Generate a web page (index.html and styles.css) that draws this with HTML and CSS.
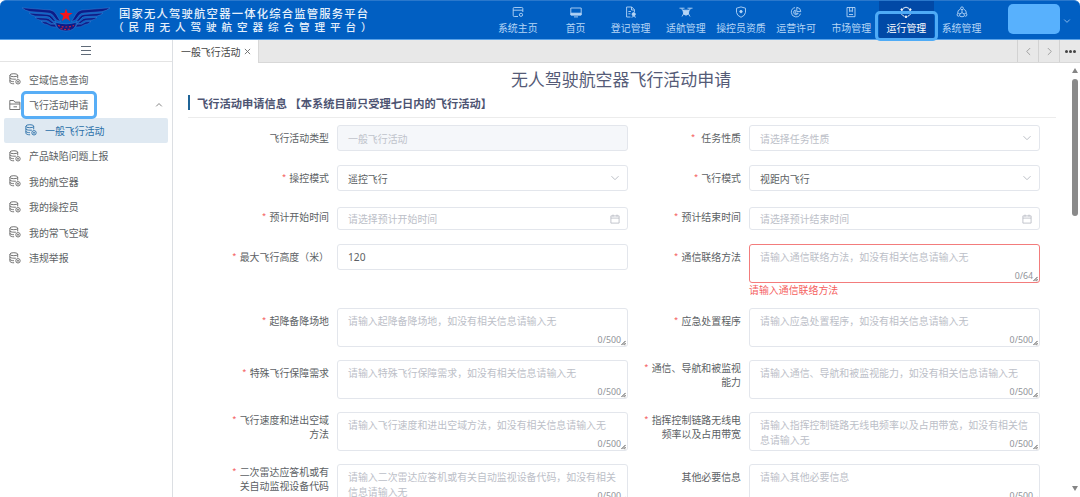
FILE: index.html
```
<!DOCTYPE html>
<html lang="zh-CN">
<head>
    <meta charset="UTF-8">
    <meta name="viewport" content="width=device-width, initial-scale=1.0">
    <title>国家无人驾驶航空器一体化综合监管服务平台</title>
    <link rel="stylesheet" href="styles.css">
</head>
<body>
    <!-- shared icons -->
    <svg class="defs" width="0" height="0">
        <symbol id="db" viewBox="0 0 12 12">
            <g fill="none" stroke="currentColor" stroke-width="0.9">
                <ellipse cx="4.800" cy="2.200" rx="3.900" ry="1.500"/>
                <path d="M.9 2.200v7c0 .9 1.800 1.600 4.200 1.600M8.700 2.200v3.200M.9 4.700c0 .9 1.800 1.500 4 1.500h2M.9 7.200c0 .9 1.800 1.500 4 1.500"/>
                <circle cx="9" cy="8.800" r="2.200"/>
                <path d="M8.200 8.800h1.600M9 8v1.600"/>
            </g>
        </symbol>
        <symbol id="down" viewBox="0 0 10 10">
            <path d="M1.500 3.200L5 6.700l3.500-3.500" fill="none" stroke="currentColor" stroke-width="0.9"/>
        </symbol>
        <symbol id="date" viewBox="0 0 10 10">
            <path d="M.9 1.900h8.200v7.200H.9zM.9 4.100h8.200M3 .6v2M7 .6v2" fill="none" stroke="currentColor" stroke-width="0.8"/>
        </symbol>
        <symbol id="grip" viewBox="0 0 6 6">
            <path d="M.5 5.500l5-5M3 5.500l2.500-2.500M5 5.700l.7-.7" fill="none" stroke="#444" stroke-width="1.100"/>
        </symbol>
    </svg>

    <header class="header">
        <svg class="logo" viewBox="0 0 88 25">
            <g fill="#0b1c88" stroke="#4b8ad9" stroke-width="0.400">
                <path d="M0 .8L28 3q4 .4 6 4l4.500 7.500-4-1.500-4-5.200Q29 6.200 26 6L8 4.600Q3 3.600 0 .8z"/>
                <path d="M88 .8L60 3q-4 .4-6 4l-4.500 7.500 4-1.500 4-5.200Q59 6.200 62 6l18-1.400q5-1 8-3.800z"/>
                <path d="M7 6l19 1.400q2.500.3 4 2.200l4 5-3-.6-3-3.200q-1-1-3-1.200L13 9Q9 8.200 7 6z"/>
                <path d="M81 6L62 7.400q-2.500.3-4 2.200l-4 5 3-.6 3-3.200q1-1 3-1.200L75 9q4-.8 6-3z"/>
                <path d="M13 10.400l12 .8q2 .3 3 1.600l5 4-3.500-.4-3-2.200-2.500-.8-6-.4q-3.500-.6-5-2.600z"/>
                <path d="M75 10.400l-12 .8q-2 .3-3 1.600l-5 4 3.500-.4 3-2.200 2.500-.8 6-.4q3.500-.6 5-2.600z"/>
                <path d="M19 14.500l5 .3 4.500 2.400h4.500l1.500 3q-6 0-9-2.500-4-.4-6.500-3.200z"/>
                <path d="M69 14.500l-5 .3-4.500 2.400H55l-1.500 3q6 0 9-2.500 4-.4 6.500-3.200z"/>
                <path d="M33.500 15.500q10.500 3 21 0-.5 4-3 6.300-3 2.200-7.500 2.200t-7.500-2.200q-2.500-2.300-3-6.300z"/>
            </g>
            <path d="M36 18.500q8 3 16 0M38.500 21.500q5.500 2 11 0" fill="none" stroke="#c5203f" stroke-width="1.200" stroke-dasharray="2 1.700"/>
            <path d="M44 1.500l1.600 4.400h4.900l-3.900 3 1.500 5L44 11.200l-4.100 2.700 1.500-5-3.900-3h4.900z" fill="#f4151c"/>
        </svg>
        <div class="brand">
            <div class="brand-main">国家无人驾驶航空器一体化综合监管服务平台</div>
            <div class="brand-sub">（民用无人驾驶航空器综合管理平台）</div>
        </div>
        <nav class="nav">
            <a class="nav-item first">
                <svg viewBox="0 0 12 12"><path d="M6 10.500H2.200a1 1 0 0 1-1-1v-7a1 1 0 0 1 1-1h7.600a1 1 0 0 1 1 1V6M1.200 4.200h9.600"/><circle cx="9" cy="8.800" r="1.600"/></svg>
                <span>系统主页</span>
            </a>
            <a class="nav-item">
                <svg viewBox="0 0 12 12"><path d="M.8 2h10.400v7H.8zM4 10.900h4"/><path d="M1 7.200h10v1.700H1z" fill="currentColor"/></svg>
                <span>首页</span>
            </a>
            <a class="nav-item">
                <svg viewBox="0 0 12 12"><path d="M5.500 11H1.600V1h5.200l2.600 2.600V6M6.500 1v3h3M3.400 5.500h2.500M3.400 7.800h2"/><circle cx="8.700" cy="8.200" r="1.600" fill="currentColor"/><path d="M6.500 11.300q2.200-2 4.400 0"/></svg>
                <span>登记管理</span>
            </a>
            <a class="nav-item">
                <svg class="wide" viewBox="0 0 14 12"><path d="M.5 2.200h5M8.500 2.200h5M3 2.200v1.500l2.500 1.500M11 2.200v1.500L8.500 5.200M5 7l-2 3.500M9 7l2 3.500"/><path d="M4 4.200h6l-.7 4L7 9.200l-2.300-1z" fill="currentColor"/></svg>
                <span>适航管理</span>
            </a>
            <a class="nav-item">
                <svg viewBox="0 0 12 12"><path d="M6 .9l4.500 1.300v4.200Q10.200 9.600 6 11.300 1.800 9.600 1.500 6.400V2.200z"/><circle cx="6" cy="5.600" r="1.200" fill="currentColor"/></svg>
                <span>操控员资质</span>
            </a>
            <a class="nav-item">
                <svg viewBox="0 0 12 12"><path d="M5 1.600a4.700 4.700 0 1 0 5.500 6"/><path d="M6.800 1.300a4.500 4.500 0 0 1 4 4.300H6.800zM5.200 4a2.400 2.400 0 1 0 3 3.300H5.200z"/></svg>
                <span>运营许可</span>
            </a>
            <a class="nav-item">
                <svg viewBox="0 0 12 12"><path d="M2 1.500h8v9.200H2zM4.600 1.500v4.200L6 4.600l1.400 1.100V1.500M4 8.500h4"/></svg>
                <span>市场管理</span>
            </a>
            <a class="nav-item active">
                <svg viewBox="0 0 12 12"><path d="M3 2.400a4.700 4.700 0 0 1 6 0M10.700 5a4.700 4.700 0 0 1-3 5.300M4.300 10.300a4.700 4.700 0 0 1-3-5.300"/><g fill="currentColor"><circle cx="1.800" cy="3.600" r=".9"/><circle cx="10.200" cy="3.600" r=".9"/><circle cx="6" cy="10.800" r=".9"/></g></svg>
                <span>运行管理</span>
                <i class="mark"></i>
            </a>
            <a class="nav-item">
                <svg viewBox="0 0 12 12"><circle cx="6" cy="2.300" r="1.400"/><circle cx="2.500" cy="8.800" r="1.400"/><circle cx="9.500" cy="8.800" r="1.400"/><path d="M6 3.700v3M6 6.700L3.700 8M6 6.700L8.300 8M4.400 3a4.500 4.500 0 0 0-2.800 4.500M7.600 3a4.500 4.500 0 0 1 2.800 4.500M4 10.300q2 1 4 0"/></svg>
                <span>系统管理</span>
            </a>
        </nav>
        <div class="user"></div>
        <svg class="user-arrow" viewBox="0 0 10 10"><use href="#down"/></svg>
    </header>

    <div class="layout">
        <aside class="sidebar">
            <div class="toggle"><i></i><i></i><i></i></div>
            <ul class="menu">
                <li><svg><use href="#db"/></svg><span>空域信息查询</span></li>
                <li>
                    <svg viewBox="0 0 12 12"><path d="M.8 10.500v-9h3.800l1.300 1.700h5v7.300zM.8 5h10M4.500 7.800h3.500" fill="none" stroke="currentColor" stroke-width="0.9"/></svg>
                    <span class="boxed">飞行活动申请</span>
                    <svg class="up" viewBox="0 0 10 10"><path d="M1.500 6.700L5 3.200l3.500 3.500" fill="none" stroke="currentColor"/></svg>
                </li>
                <li class="current"><svg><use href="#db"/></svg><span>一般飞行活动</span></li>
                <li><svg><use href="#db"/></svg><span>产品缺陷问题上报</span></li>
                <li><svg><use href="#db"/></svg><span>我的航空器</span></li>
                <li><svg><use href="#db"/></svg><span>我的操控员</span></li>
                <li><svg><use href="#db"/></svg><span>我的常飞空域</span></li>
                <li><svg><use href="#db"/></svg><span>违规举报</span></li>
            </ul>
        </aside>

        <main class="main">
            <div class="tabs">
                <div class="tab"><span>一般飞行活动</span><svg viewBox="0 0 8 8"><path d="M1 1l6 6M7 1L1 7"/></svg></div>
                <div class="tab-tools">
                    <span><svg viewBox="0 0 10 10"><path d="M6.800 1.200L3 5l3.800 3.800"/></svg></span>
                    <span><svg viewBox="0 0 10 10"><path d="M3.200 1.200L7 5 3.200 8.800"/></svg></span>
                    <span class="more"><i></i><i></i><i></i></span>
                </div>
            </div>

            <div class="page">
                <div class="content">
                    <h1>无人驾驶航空器飞行活动申请</h1>
                    <h2>飞行活动申请信息 【本系统目前只受理七日内的飞行活动】</h2>

                    <div class="form">
                        <div class="label">飞行活动类型</div>
                        <div class="input disabled">一般飞行活动</div>
                        <div class="label required far">任务性质</div>
                        <div class="input empty">请选择任务性质<svg><use href="#down"/></svg></div>

                        <div class="label required">操控模式</div>
                        <div class="input">遥控飞行<svg><use href="#down"/></svg></div>
                        <div class="label required">飞行模式</div>
                        <div class="input">视距内飞行<svg><use href="#down"/></svg></div>

                        <div class="label required date">预计开始时间</div>
                        <div class="input date empty">请选择预计开始时间<svg><use href="#date"/></svg></div>
                        <div class="label required date">预计结束时间</div>
                        <div class="input date empty">请选择预计结束时间<svg><use href="#date"/></svg></div>

                        <div class="label required">最大飞行高度（米）</div>
                        <div class="input number">120</div>
                        <div class="label required">通信联络方法</div>
                        <div>
                            <div class="textarea error">请输入通信联络方法，如没有相关信息请输入无<span class="count">0/64<svg><use href="#grip"/></svg></span></div>
                            <div class="error-text">请输入通信联络方法</div>
                        </div>

                        <div class="label required">起降备降场地</div>
                        <div class="textarea">请输入起降备降场地，如没有相关信息请输入无<span class="count">0/500<svg><use href="#grip"/></svg></span></div>
                        <div class="label required">应急处置程序</div>
                        <div class="textarea">请输入应急处置程序，如没有相关信息请输入无<span class="count">0/500<svg><use href="#grip"/></svg></span></div>

                        <div class="label required">特殊飞行保障需求</div>
                        <div class="textarea">请输入特殊飞行保障需求，如没有相关信息请输入无<span class="count">0/500<svg><use href="#grip"/></svg></span></div>
                        <div class="label required">通信、导航和被监视<br>能力</div>
                        <div class="textarea">请输入通信、导航和被监视能力，如没有相关信息请输入无<span class="count">0/500<svg><use href="#grip"/></svg></span></div>

                        <div class="label required">飞行速度和进出空域<br>方法</div>
                        <div class="textarea">请输入飞行速度和进出空域方法，如没有相关信息请输入无<span class="count">0/500<svg><use href="#grip"/></svg></span></div>
                        <div class="label required">指挥控制链路无线电<br>频率以及占用带宽</div>
                        <div class="textarea">请输入指挥控制链路无线电频率以及占用带宽，如没有相关信息请输入无<span class="count">0/500<svg><use href="#grip"/></svg></span></div>

                        <div class="label required">二次雷达应答机或有<br>关自动监视设备代码</div>
                        <div class="textarea">请输入二次雷达应答机或有关自动监视设备代码，如没有相关信息请输入无<span class="count">0/500<svg><use href="#grip"/></svg></span></div>
                        <div class="label">其他必要信息</div>
                        <div class="textarea">请输入其他必要信息<span class="count">0/500<svg><use href="#grip"/></svg></span></div>
                    </div>
                </div>
                <div class="scrollbar">
                    <i class="arrow-up"></i>
                    <i class="thumb"></i>
                    <i class="arrow-down"></i>
                </div>
            </div>
        </main>
    </div>
</body>
</html>
```
FILE: styles.css
```
* {
    box-sizing: border-box;
}

body {
    margin: 0;
    width: 1080px;
    height: 497px;
    overflow: hidden;
    background: #fff;
    color: #5c5f64;
    font-family: "Noto Sans CJK SC", sans-serif;
    font-size: 9.930px;
    font-weight: 400;
}

.defs {
    position: absolute;
}

/* header */
.header {
    display: flex;
    height: 40px;
    background: #015fc2;
    border-top: 1px solid #2a78cc;
    border-bottom: 1px solid #5ba3e8;
    border-radius: 6px 6px 0 0;
    color: #fff;
}

.logo {
    width: 88px;
    height: 25px;
    margin: 6px 0 0 22px;
}

.brand {
    width: 377.500px;
    padding: 5px 0 0 9px;
    color: #e6f0fb;
    font-weight: 500;
    white-space: nowrap;
}

.brand-main {
    font-size: 11.3px;
    line-height: 14px;
    letter-spacing: 1.22px;
}

.brand-sub {
    margin-left: -6px;
    font-size: 10.600px;
    line-height: 13px;
    letter-spacing: 4.900px;
}

.nav {
    display: flex;
}

.nav-item {
    position: relative;
    display: flex;
    flex-direction: column;
    align-items: center;
    width: 55.150px;
    height: 38px;
    padding-top: 5px;
    color: #b5d5f6;
    white-space: nowrap;
}

.nav-item.first {
    width: 60.500px;
}

.nav-item svg {
    width: 12px;
    height: 12px;
    fill: none;
    stroke: currentColor;
    stroke-width: 0.9;
}

.nav-item svg.wide {
    width: 14px;
}

.nav-item span {
    margin-top: 3px;
    line-height: 14px;
}

.nav-item.active {
    background: #0149a6;
    color: #fff;
}

.mark {
    position: absolute;
    left: -4px;
    top: 10px;
    width: 63px;
    height: 30px;
    border: 3px solid #4fabf6;
    border-radius: 5px;
}

.user {
    width: 52px;
    height: 30px;
    margin: 3px 0 0 19px;
    border-radius: 5px;
    background: #58b1fd;
}

.user-arrow {
    width: 8px;
    height: 8px;
    margin: 16px 0 0 3px;
    color: #b8d8fa;
}

/* sidebar */
.layout {
    display: flex;
    height: 457px;
}

.sidebar {
    width: 173px;
    border-right: 1px solid #dcdfe3;
}

.toggle {
    display: flex;
    flex-direction: column;
    align-items: center;
    gap: 3px;
    height: 22px;
    padding-top: 6px;
    border-bottom: 1px solid #e4e4e4;
}

.toggle i {
    width: 10px;
    height: 1px;
    background: #606b78;
}

.menu {
    margin: 0;
    padding: 4.500px 4px 0;
    list-style: none;
}

.menu li {
    display: flex;
    align-items: center;
    gap: 8px;
    height: 25.500px;
    padding-left: 5px;
}

.menu svg {
    width: 12px;
    height: 12px;
    color: #666;
}

.menu .boxed {
    margin: 0 -8px;
    padding: 4px 5px;
    border: 3px solid #58aef6;
    border-radius: 5px;
    line-height: 14px;
}

.menu .up {
    width: 8px;
    height: 8px;
    margin: 0 5px 0 auto;
}

.menu .current {
    padding-left: 21px;
    border-radius: 2px;
    background: #dfe9f2;
    color: #2a6fa8;
}

.menu .current svg {
    color: #2a6fa8;
}

/* tabs */
.main {
    width: 907px;
}

.tabs {
    display: flex;
    justify-content: space-between;
    height: 23px;
    background: #e8e8e8;
    border-bottom: 1px solid #d8d8d8;
}

.tab {
    display: flex;
    align-items: center;
    gap: 3px;
    width: 86px;
    height: 23px;
    padding-left: 8px;
    background: #fff;
    border-right: 1px solid #d8d8d8;
    color: #444;
}

.tab svg {
    width: 7px;
    height: 7px;
    fill: none;
    stroke: #666;
}

.tab-tools {
    display: flex;
}

.tab-tools span {
    display: flex;
    align-items: center;
    justify-content: center;
    width: 21px;
    border-left: 1px solid #d2d2d2;
}

.tab-tools svg {
    width: 9px;
    height: 9px;
    fill: none;
    stroke: #999;
}

.tab-tools .more {
    gap: 1px;
}

.more i {
    width: 3px;
    height: 3px;
    border-radius: 50%;
    background: #444;
}

/* page */
.page {
    display: flex;
    height: 434px;
}

.content {
    width: 883px;
    padding-left: 15px;
    overflow: hidden;
}

h1 {
    margin: 4px 0 0;
    height: 25px;
    padding-right: 2px;
    color: #555b77;
    font-size: 16.950px;
    font-weight: 400;
    line-height: 24px;
    text-align: center;
}

h2 {
    display: flex;
    align-items: center;
    height: 26px;
    margin: 0 0 7px;
    padding: 0 0 4px;
    border-bottom: 1px solid #ececec;
    color: #4d5472;
    font-size: 11.250px;
    font-weight: 700;
    white-space: pre;
}

h2::before {
    content: '';
    width: 2px;
    height: 15px;
    margin-right: 7px;
    background: #1f6497;
}

.form {
    display: grid;
    grid-template-columns: 141px 291px 105px 291px;
    grid-template-rows: 40px 42px 37px 64px 52px 52px 52px 52px;
    column-gap: 8px;
    align-items: start;
}

.label {
    padding-top: 6px;
    line-height: 14px;
    text-align: right;
    white-space: nowrap;
}

.label:has(br) {
    padding-top: 1px;
}

.label.date {
    padding-top: 3px;
}

.required::before {
    content: '*';
    margin-right: 3px;
    color: #f56c6c;
}

.required.far::before {
    margin-right: 6px;
}

.input {
    display: flex;
    align-items: center;
    justify-content: space-between;
    height: 26px;
    padding: 0 7px 0 10px;
    border: 1px solid #e3e6ec;
    border-radius: 3px;
}

.input.date {
    height: 23px;
}

.input svg {
    width: 10px;
    height: 10px;
    color: #b4b8c0;
}

.input.empty {
    color: #bcc0c8;
}

.input.disabled {
    background: #f5f7fa;
    color: #bfc3cb;
}

.input.number {
    font-family: "Noto Sans", sans-serif;
    font-size: 10.200px;
}

.textarea {
    position: relative;
    height: 39px;
    padding: 5px 10px 0;
    border: 1px solid #e3e6ec;
    border-radius: 3px;
    color: #bcc0c8;
    line-height: 14.500px;
}

.textarea.error {
    border-color: #f37c7c;
}

.count {
    position: absolute;
    right: 1px;
    bottom: 0;
    display: flex;
    align-items: flex-end;
    color: #909399;
    font-family: "Noto Sans", sans-serif;
    font-size: 8.800px;
    line-height: 11px;
}

.count svg {
    width: 5px;
    height: 6px;
}

.error-text {
    color: #f55f5f;
    line-height: 14px;
}

/* scrollbar */
.scrollbar {
    display: flex;
    flex-direction: column;
    align-items: center;
    width: 24px;
    padding: 5px 0 6px 13px;
}

.arrow-up,
.arrow-down {
    border: 3.500px solid transparent;
}

.arrow-up {
    border-top: 0;
    border-bottom: 5px solid #858585;
}

.arrow-down {
    margin-top: auto;
    border-bottom: 0;
    border-top: 5px solid #858585;
}

.thumb {
    width: 6px;
    height: 137px;
    margin-top: 6px;
    border-radius: 3px;
    background: #8a8a8a;
}
```
